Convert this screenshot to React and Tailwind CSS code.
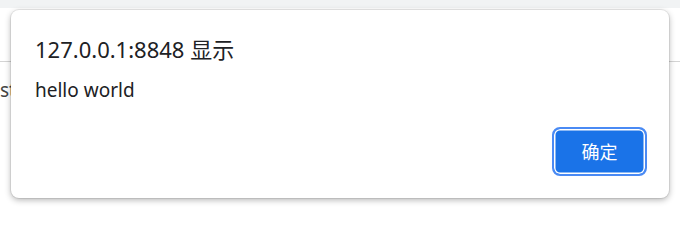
import React from "react";

export default function App() {
  return (
    <div
      className="relative w-[680px] h-[211px] overflow-hidden bg-white"
      style={{ fontFamily: '"Noto Sans", "Noto Sans CJK SC", sans-serif' }}
    >
      <div className="h-2 bg-[#f1f3f4]" />
      <div className="mt-[53px] h-px bg-[#d4d4d4]" />
      <div className="mt-[15px] text-[19px] leading-[26px] text-[#444]">st</div>

      <div className="absolute left-[11px] top-[10px] w-[658px] h-[188px] rounded-[8px] bg-white shadow-[0_0_0_1px_rgba(0,0,0,0.07),0_2px_6px_rgba(0,0,0,0.3)] flex flex-col pl-6 pr-[22px] pt-[24px] pb-[22px]">
        <div className="text-[22px] leading-[30px] text-[#202124]">127.0.0.1:8848 显示</div>
        <div className="mt-[13px] text-[19px] leading-[26px] text-[#202124]">hello world</div>
        <div className="mt-auto flex justify-end">
          <button className="w-[95px] h-[49px] rounded-[8px] border-2 border-[#4a8af4] bg-[#1a73e8] shadow-[inset_0_0_0_1.5px_#ffffff] text-white text-[18px] leading-none">
            确定
          </button>
        </div>
      </div>
    </div>
  );
}
